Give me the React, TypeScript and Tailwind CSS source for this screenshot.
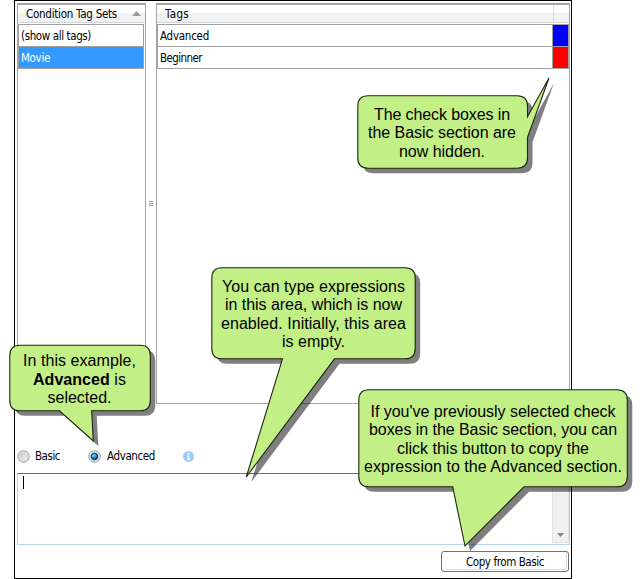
import React from "react";

const ui = "font-['DejaVu_Sans_Condensed','DejaVu_Sans',sans-serif] [font-stretch:condensed] text-[11.5px] leading-[22px] text-black whitespace-nowrap";

type Line = { content: React.ReactNode; width: number };

function FitText({ children, width, className = "" }: { children: React.ReactNode; width: number; className?: string }) {
  const ref = React.useRef<HTMLSpanElement>(null);
  const [spacing, setSpacing] = React.useState(0);
  React.useLayoutEffect(() => {
    const el = ref.current;
    if (!el) return;
    const n = (el.textContent || "").length;
    setSpacing((width - el.getBoundingClientRect().width) / n);
  }, [width]);
  return (
    <span ref={ref} className={`inline-block whitespace-nowrap ${className}`} style={{ letterSpacing: spacing }}>
      {children}
    </span>
  );
}

function Callout({ path, box, lines }: { path: string; box: string; lines: Line[] }) {
  return (
    <>
      <svg className="absolute left-0 top-0" width="642" height="579" viewBox="0 0 642 579">
        <path d={path} transform="translate(5 5)" fill="#000" fillOpacity="0.5" />
        <path d={path} fill="#c2ef86" stroke="#1c2410" strokeWidth="1.1" />
      </svg>
      <div className={`absolute flex flex-col items-center font-['Liberation_Sans',Arial,sans-serif] text-[16px] leading-[18.5px] text-black ${box}`}>
        {lines.map((l, i) => (
          <FitText key={i} width={l.width}>{l.content}</FitText>
        ))}
      </div>
    </>
  );
}

function Radio({ checked = false }: { checked?: boolean }) {
  return (
    <svg width="13" height="13" viewBox="0 0 13 13">
      <defs>
        <linearGradient id="ring" x1="0" y1="0" x2="1" y2="1">
          <stop offset="0" stopColor="#c0c4c8" />
          <stop offset="1" stopColor="#f6f6f6" />
        </linearGradient>
        <radialGradient id="dot" cx="0.4" cy="0.35" r="0.7">
          <stop offset="0" stopColor="#8fdcf4" />
          <stop offset="0.5" stopColor="#1f83b4" />
          <stop offset="1" stopColor="#0b2f50" />
        </radialGradient>
      </defs>
      <circle cx="6.5" cy="6.5" r="5.7" fill="#fafafa" stroke="#858585" strokeWidth="0.9" />
      <circle cx="6.5" cy="6.5" r="4.1" fill="url(#ring)" stroke={checked ? "#a9c6d8" : "#c8ccd0"} strokeWidth="0.7" />
      {checked && <circle cx="6.5" cy="6.5" r="3.3" fill="url(#dot)" stroke="#10324e" strokeWidth="0.8" />}
    </svg>
  );
}

const header = "mb-px flex h-[18px] items-center bg-gradient-to-b from-white from-45% to-[#f1f2f4] to-50% border-b border-[#d5d5d5]";

export default function App() {
  return (
    <div className={`relative h-[579px] w-[642px] overflow-hidden bg-white ${ui}`}>
      <div className="ml-[14px] flex h-[579px] w-[558px] flex-col border border-black pl-[2px] pt-[2px]">
        <div className="flex h-[401px] shrink-0">
          <div className="w-[129px] border border-t-2 border-[#a5a5a8]">
            <div className={`${header} justify-between pl-[8px] pr-1`}>
              <FitText width={91} className="pt-px">Condition Tag Sets</FitText>
              <svg width="9" height="5" viewBox="0 0 9 5"><path d="M4.5 0L9 5H0z" fill="#9b9b9b" /></svg>
            </div>
            <div className="mr-px h-[23px] border border-[#a0a0a0] pl-[2px]"><FitText width={70}>(show all tags)</FitText></div>
            <div className="mr-px h-[22px] border border-t-0 border-[#a0a0a0] bg-[#3399ff] pl-[2px] text-white"><FitText width={29}>Movie</FitText></div>
          </div>
          <div className="flex w-[10px] flex-col items-center justify-center gap-px">
            <i className="h-px w-1 bg-[#999]" /><i className="h-px w-1 bg-[#999]" /><i className="h-px w-1 bg-[#999]" />
          </div>
          <div className="w-[414px] border border-t-2 border-[#a5a5a8]">
            <div className={`${header} pl-[8px]`}>
              <FitText width={24} className="pt-px">Tags</FitText>
              <i className="ml-auto mr-[15px] h-full w-px bg-[#dcdcdc]" />
            </div>
            <div className="flex h-[23px] border border-[#a0a0a0] pl-[2px]">
              <FitText width={49}>Advanced</FitText>
              <i className="ml-auto h-full w-4 border-l border-[#a0a0a0] bg-[#0000ff]" />
            </div>
            <div className="flex h-[22px] border border-t-0 border-[#a0a0a0] pl-[2px]">
              <FitText width={42}>Beginner</FitText>
              <i className="ml-auto h-full w-4 border-l border-[#a0a0a0] bg-[#ff0000]" />
            </div>
          </div>
        </div>
        <div className="mt-[41px] flex h-[22px] shrink-0 items-center">
          <Radio />
          <FitText width={25} className="ml-[5px]">Basic</FitText>
          <span className="ml-[28px] flex"><Radio checked /></span>
          <FitText width={48} className="ml-[6px]">Advanced</FitText>
          <svg className="ml-[28px]" width="11" height="11" viewBox="0 0 11 11">
            <circle cx="5.5" cy="5.5" r="5.5" fill="#99ccff" />
            <path d="M4.7 2h1.8v1.4H4.7zM4.2 4.4h2.2v3.5H7v1H4v-1h.7V5.3h-.5z" fill="#fff" />
          </svg>
        </div>
        <div className="mt-[6px] flex h-[72px] w-[553px] shrink-0 justify-between border border-x-[#b5cfe7] border-b-[#b5d8ee] border-t-[#3d7bad]">
          <i className="ml-[5px] mt-[2px] h-[13px] w-px bg-black" />
          <div className="flex h-[69px] w-[17px] items-end justify-center border border-[#e2e2e2] bg-[#f0f0f0] pb-[5px]">
            <svg width="7" height="4" viewBox="0 0 7 4"><path d="M0 0h7L3.5 4z" fill="#858585" /></svg>
          </div>
        </div>
        <button className="ml-[424px] mt-[6px] flex h-[21px] w-[128px] shrink-0 items-center justify-center rounded-[3px] border border-[#707070] bg-white shadow-[inset_0_0_0_1px_#fff,inset_-1px_-1px_0_1px_#ddd]">
          <FitText width={78} className="pt-px">Copy from Basic</FitText>
        </button>
      </div>

      <Callout
        path="M368 95.8H517Q527.5 96 527.5 106V116.7L549 78L527.5 137.3V158Q527.5 168.2 517 168.2H368Q357.8 168.2 357.8 158V106Q357.8 95.8 368 95.8Z"
        box="left-[358px] top-[105.5px] w-[168px]"
        lines={[{ content: "The check boxes in", width: 136 }, { content: "the Basic section are", width: 148 }, { content: "now hidden.", width: 86 }]}
      />
      <Callout
        path="M222 267.8H405Q415.2 268 415.2 278V348.5Q415.2 358.8 405 358.8H334.5L246.3 477L282.5 358.8H222Q211.8 358.8 211.8 348.5V278Q211.8 267.8 222 267.8Z"
        box="left-[212px] top-[277.5px] w-[203px]"
        lines={[{ content: "You can type expressions", width: 183 }, { content: "in this area, which is now", width: 177 }, { content: "enabled. Initially, this area", width: 185 }, { content: "is empty.", width: 63 }]}
      />
      <Callout
        path="M20 345.2H140Q150.3 345.2 150.3 355.5V400.5Q150.3 410.8 140 410.8H91.7L93.3 441L59.5 410.8H20Q9.8 410.8 9.8 400.5V355.5Q9.8 345.2 20 345.2Z"
        box="left-[9px] top-[352px] w-[141px]"
        lines={[{ content: "In this example,", width: 113 }, { content: <><b>Advanced</b> is</>, width: 93 }, { content: "selected.", width: 64 }]}
      />
      <Callout
        path="M369 389.8H617Q627.3 390 627.3 400V476.5Q627.3 486.8 617 486.8H524L465 546L452.7 486.8H369Q358.8 486.8 358.8 476.5V400Q358.8 389.8 369 389.8Z"
        box="left-[359px] top-[402.5px] w-[268px]"
        lines={[{ content: "If you've previously selected check", width: 245 }, { content: "boxes in the Basic section, you can", width: 248 }, { content: "click this button to copy the", width: 192 }, { content: "expression to the Advanced section.", width: 258 }]}
      />
    </div>
  );
}
